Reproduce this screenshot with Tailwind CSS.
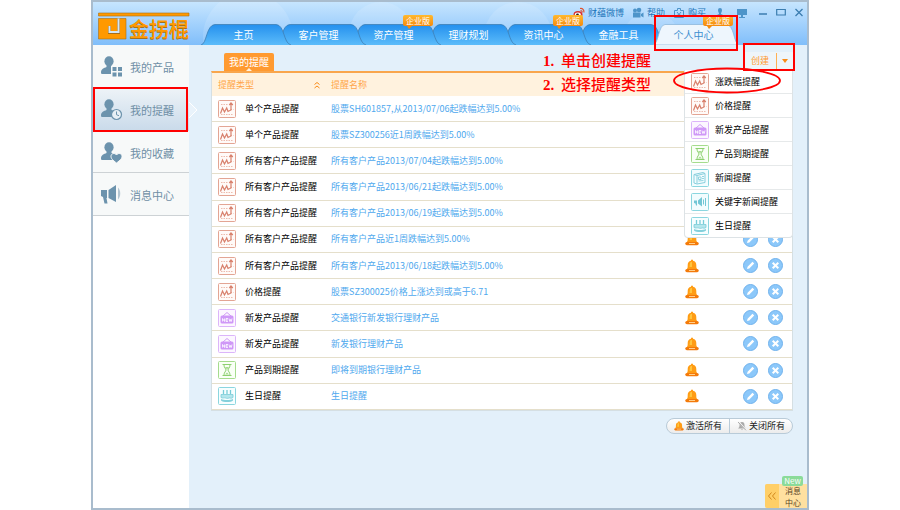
<!DOCTYPE html>
<html lang="zh-CN">
<head>
<meta charset="utf-8">
<meta name="viewport" content="width=device-width, initial-scale=1">
<title>金拐棍 - 我的提醒</title>
<script src="https://cdn.jsdelivr.net/npm/@tailwindcss/browser@4"></script>
</head>
<body class="bg-white font-['Noto_Sans_CJK_SC',sans-serif] text-[9px] leading-[12px] text-[#222]">

<svg class="absolute h-0 w-0" aria-hidden="true">
  <symbol id="chart" viewBox="0 0 18 18"><rect x=".5" y=".5" width="17" height="17" rx="1" fill="#fffaf8" stroke="#e3a594"/><path d="M3 14.500h12M3 4.500h7M12.500 9.500h3" stroke="#ecbcae" stroke-dasharray="1.500 1" fill="none"/><path d="M2.500 13.500 4.500 8l2 4 2.200-4 1.300 3.500 3-1.500V3.500M11.300 5 13 3l1.800 2" stroke="#d8806c" stroke-width="1.200" fill="none"/></symbol>
  <symbol id="new" viewBox="0 0 18 18"><rect x=".5" y=".5" width="17" height="17" rx="1" fill="#fcf7ff" stroke="#dcb5fa"/><path d="m5 7 4-3.500L13 7" stroke="#cf9bf5" fill="none"/><rect x="2.500" y="6.500" width="13" height="8" rx="1.500" fill="#cf98f7"/><path d="M4.500 12.500v-3l2 3v-3M10 9.500H8v3h2M8 11h2M11 9.500l.8 3 .7-2 .7 2 .8-3" stroke="#fff" stroke-width=".8" fill="none"/></symbol>
  <symbol id="glass" viewBox="0 0 18 18"><rect x=".5" y=".5" width="17" height="17" rx="1" fill="#f9fff6" stroke="#a5dc8d"/><path d="M4.500 3.500h9M4.500 14.500h9M6 4c0 3 2 3.500 2 5s-2 2-2 5M12 4c0 3-2 3.500-2 5s2 2 2 5" stroke="#8dd070" stroke-width="1" fill="none"/><path d="M7 6h4L9 8.500zM7 13.500l2-2 2 2z" fill="#a5dc8d"/></symbol>
  <symbol id="cake" viewBox="0 0 18 18"><rect x=".5" y=".5" width="17" height="17" rx="1" fill="#f6feff" stroke="#8bd6df"/><path d="M5.500 3v4M9 3v4M12.500 3v4" stroke="#78ccd8" stroke-width="1.300"/><path d="M3 7.500h12v3c-2 1.500-3 0-4 .5s-2 .5-3.500 0-3 .5-4.500-.5z" fill="#b4e6ec" stroke="#78ccd8" stroke-width=".8"/><path d="M3 12c3 1.300 9 1.300 12 0v1.500c-2 2-10 2-12 0z" fill="#83d0db"/></symbol>
  <symbol id="news" viewBox="0 0 18 18"><rect x=".5" y=".5" width="17" height="17" rx="1" fill="#f2fcfe" stroke="#8bd6df"/><path d="m3 5.500 9-2 2 1v9l-8 1.500-3-1zM6 14.500v-8l8-2M3 5.500l3 1" stroke="#88cfdd" fill="none"/><path d="M7.500 8h2.500v2.500H7.500zM11 7.500h2M11 9.500h2M7.500 12l5-.5" stroke="#88cfdd" stroke-width=".9" fill="none"/></symbol>
  <symbol id="horn" viewBox="0 0 18 18"><rect x=".5" y=".5" width="17" height="17" rx="1" fill="#f2fcfe" stroke="#8bd6df"/><path d="M3 7.500h3v5H5l-.5-2L3 10zM7 7.500 11 4v9.500l-4-3z" fill="#72c6d5"/><path d="M12.500 6.500v5M14.500 5v8" stroke="#72c6d5"/></symbol>
  <symbol id="bell" viewBox="0 0 14 14"><path d="M7 .5c1 0 1 .8 1 1.200 2.300.5 3.300 2 3.300 4.300 0 2.500 0 3 1.200 4.500h-11C2.700 9 2.700 8.500 2.700 6c0-2.300 1-3.800 3.300-4.300 0-.4 0-1.200 1-1.200z" fill="#ff9c14"/><path d="M5 4c.5-1.200 1.500-1.200 2-1v5H4.500z" fill="#ffc43c"/><rect x=".3" y="10" width="13.400" height="3.200" rx="1.600" fill="#f47a0a"/><path d="M4 11.500h6" stroke="#ffd08a"/></symbol>
  <symbol id="bell-off" viewBox="0 0 14 14"><path d="M7 1.500c3 0 3.500 2 3.500 4.500s.5 3 2 4.500h-11C3 9 3.500 8.500 3.500 6S4 1.500 7 1.500zM5.500 11.500h3L7 13z" fill="#aaa"/><path d="m2 1 11 12" stroke="#f6f6f6" stroke-width="2.200"/><path d="m1.500 1.500 11 11.500" stroke="#888"/></symbol>
  <symbol id="edit" viewBox="0 0 15 15"><circle cx="7.500" cy="7.500" r="7" fill="#8cc8fa" stroke="#70b2ec"/><path d="m4 11 .6-2.300 4.900-4.900 1.700 1.700-4.900 4.900z" fill="#fff"/></symbol>
  <symbol id="del" viewBox="0 0 15 15"><circle cx="7.500" cy="7.500" r="7" fill="#8cc8fa" stroke="#70b2ec"/><path d="m4.700 4.700 5.600 5.600M10.300 4.700l-5.600 5.600" stroke="#fff" stroke-width="2"/></symbol>
  <symbol id="person" viewBox="0 0 20 20"><ellipse cx="8" cy="5.300" rx="4.600" ry="5" fill="#6c93ad"/><path d="M0 16.500c0-3.500 3-4.500 5.500-5.500v-2h5v2c2 .8 4 1.500 5 3v4H1.500C.5 18 0 17.500 0 16.500z" fill="#6c93ad"/></symbol>
  <symbol id="tab" viewBox="0 0 90 21"><path d="M0 21C6 20 5 1 14 .5h61C84 1 82 19 90 21z" fill="url(#tabfill)"/><path d="M0 21C6 20 5 1 14 .5h61C84 1 82 19 90 21" fill="none" stroke="#3d7fb5" stroke-width=".8"/></symbol>
  <linearGradient id="tabfill" x1="0" y1="0" x2="0" y2="1"><stop offset="0" stop-color="#2490ee"/><stop offset="1" stop-color="#5cbcfa"/></linearGradient>
</svg>

<div class="relative mx-auto flex min-h-screen max-w-[718px] flex-col border-2 border-[#a9bccd] bg-[#e3f0fa]">
  <header class="relative isolate flex h-[43px] justify-between overflow-hidden bg-linear-to-b from-[#c6e5fe] to-[#80befa]">
    <svg class="absolute inset-0 h-full w-full" aria-hidden="true"><g fill="#fff" fill-opacity=".13"><circle cx="155" cy="35" r="45"/><circle cx="288" cy="32" r="32"/><circle cx="425" cy="34" r="34"/><circle cx="558" cy="40" r="30"/></g></svg>
    <a href="#" class="relative ml-1 mt-2.5 flex h-[30px] items-end" aria-label="金拐棍">
      <svg class="absolute left-0 top-0 h-[30px] w-[93px]" viewBox="0 0 93 30"><path d="M1.500 1h90.500v3H1.500zM1.500 6.500H29V27H1.500z" fill="#ff9900" stroke="#a66f1a" stroke-width=".6"/><path d="M21.500 7v13.500H12.500V14" fill="none" stroke="#a66f1a" stroke-width="3"/><path d="M21.500 6.500v13.500H12.500V14" fill="none" stroke="#d3e6f5" stroke-width="2"/></svg>
      <span class="ml-[32px] text-[20px] leading-[26px] font-medium text-[#ff9900] [text-shadow:0_1px_0_#a66f1a]">金拐棍</span>
    </a>
    <div class="relative flex flex-col justify-between">
      <nav class="mr-[3px] mt-[5px] flex h-3 items-center justify-end text-[#1b75b9]" aria-label="工具">
        <a href="#" class="flex items-center gap-[3px]"><svg class="h-3 w-3" viewBox="0 0 12 12"><ellipse cx="5" cy="7.500" rx="4.500" ry="3.500" fill="#d92f30"/><ellipse cx="4.800" cy="7.800" rx="3" ry="2.200" fill="#fff"/><circle cx="4.500" cy="8" r="1.400" fill="#222"/><path d="M7 1.500c2.500-.5 4.500 1.500 3.800 4M7.500 3.500c1 0 2 .8 1.500 2" stroke="#e0502c" stroke-width="1.200" fill="none"/></svg>财蕴微博</a>
        <a href="#" class="ml-2 flex items-center gap-[3px]"><svg class="h-3 w-3" viewBox="0 0 12 12" fill="#4d94c9"><circle cx="3" cy="3.500" r="2"/><circle cx="7" cy="3" r="2.300"/><path d="M1 5.500h7.500v5H1zM9 7l2.500-1.500v5L9 9z"/></svg>帮助</a>
        <a href="#" class="ml-2 flex items-center gap-[3px]"><svg class="h-3 w-3" viewBox="0 0 12 12" fill="none" stroke="#4d94c9"><path d="M1.500 3.500h3v-2h3v2h3v7h-9z"/><path d="m4 5 2 2.500L8 5M6 7v3M4.500 8h3"/></svg>购买</a>
        <button aria-label="用户" class="ml-2"><svg class="h-3 w-3" viewBox="0 0 12 12" fill="#4d94c9"><path d="M4 3a2 2 0 0 1 4 0c0 2-1 2.500-1 4l4 2v1H1V9l4-2c0-1.500-1-2-1-4z"/></svg></button>
        <button aria-label="屏幕" class="ml-2.5"><svg class="h-3 w-3" viewBox="0 0 12 12" fill="#4d94c9"><path d="M1 2h10v6H7v2h2v1H3v-1h2V8H1z"/></svg></button>
        <button aria-label="最小化" class="ml-2.5"><svg class="h-2.5 w-2.5" viewBox="0 0 10 10"><path d="M1 6h8" stroke="#3b7db0" stroke-width="1.500"/></svg></button>
        <button aria-label="最大化" class="ml-2"><svg class="h-2.5 w-2.5" viewBox="0 0 10 10"><path d="M.7 1.500h8.600v5.500H.7z" fill="none" stroke="#3b7db0" stroke-width="1.200"/></svg></button>
        <button aria-label="关闭" class="ml-2"><svg class="h-2.5 w-2.5" viewBox="0 0 10 10"><path d="m1.500 1 7 7M8.500 1l-7 7" stroke="#3b7db0" stroke-width="1.300"/></svg></button>
      </nav>
      <nav id="tabs" class="mr-[76px] flex text-[10px] text-white" aria-label="主导航"></nav>
    </div>
  </header>

  <div class="flex flex-1">
    <aside class="w-24 shrink-0 bg-white">
      <nav class="text-[11px] text-[#6f8fa6]" aria-label="侧栏">
        <a href="#" class="flex h-[42px] items-center gap-[7px] bg-[#f7f9f9] pl-2 pt-0.5"><svg class="h-[22px] w-[22px]" viewBox="0 0 22 22"><use href="#person" width="20" height="20"/><path d="M10 10h12v12H10z" fill="#f7f9f9"/><path d="M11.500 11h4v4h-4zM17 11h4v4h-4zM11.500 16.500h4v4h-4zM17 16.500h4v4h-4z" fill="#6c93ad"/></svg>我的产品</a>
        <a href="#" aria-current="page" class="flex h-11 items-center gap-[7px] bg-linear-to-b from-[#eff4f8] to-[#c9daea] pl-2 pt-0.5"><svg class="h-[22px] w-[22px]" viewBox="0 0 22 22"><use href="#person" width="20" height="20"/><circle cx="15.500" cy="15.500" r="5" fill="#e7eff5" stroke="#6c93ad" stroke-width="1.200"/><path d="M15.500 12.500v3.200l2.500 1" fill="none" stroke="#6c93ad"/></svg>我的提醒</a>
        <a href="#" class="flex h-[42px] items-center gap-[7px] border-b border-[#cdd2d5] bg-[#f7f9f9] pl-2 pt-0.5"><svg class="h-[22px] w-[22px]" viewBox="0 0 22 22"><use href="#person" width="20" height="20"/><path d="M15.500 21c-4-3-5.500-4.500-5.500-6.700 0-3 4-3.800 5.500-1.300 1.500-2.500 5.500-1.700 5.500 1.300 0 2.200-1.500 3.700-5.500 6.700z" fill="#6c93ad" stroke="#f7f9f9"/></svg>我的收藏</a>
        <a href="#" class="flex h-[43px] items-center gap-[7px] border-b border-[#cdd2d5] bg-[#f7f9f9] pl-2 pt-0.5"><svg class="h-[22px] w-[22px]" viewBox="0 0 22 22" fill="#6c93ad"><path d="M0 6h6v8H5.500l1 5.500h-3L2 13l-2-1zM7.500 6l7.500-5v17l-7.500-4z"/><path d="M17 3.500c3 3 3 9 0 12z" fill="#b4c6d2"/></svg>消息中心</a>
      </nav>
    </aside>

    <main class="relative flex-1 pl-[22px] pr-3.5 pt-[7px]">
      <svg class="absolute left-0 top-14 h-[18px] w-2.5" viewBox="0 0 10 18" aria-hidden="true"><path d="m0 1 8 8-8 8" fill="#e9f3fb" stroke="#fff"/></svg>
      <div class="flex items-end justify-between">
        <h1 class="relative ml-[13px] flex h-[18px] items-center rounded-t-xs bg-[#ff9a30] px-[5px] text-[10px] text-white">我的提醒<svg class="absolute bottom-0 left-[22px] h-[3px] w-1.5" viewBox="0 0 6 3"><path d="m0 3 3-3 3 3z" fill="#fff2de"/></svg></h1>
        <div class="mb-px flex h-[18px] items-center bg-[#eef5fa] text-[#ff9a30]">
          <button class="px-[7px]">创建</button>
          <button aria-label="选择提醒类型" class="flex h-4 w-[17px] items-center justify-center border-l border-[#ffb053]"><svg class="h-1 w-1.5" viewBox="0 0 6 4"><path d="M0 0h6L3 4z" fill="#f98b16"/></svg></button>
        </div>
      </div>
      <table class="h-[340px] w-full table-fixed border-separate border-spacing-0 border border-t-2 border-[#d5dfe3] border-t-[#f9a64c] bg-white text-left">
        <colgroup><col class="w-[33px]"><col class="w-[86px]"><col><col class="w-[44px]"><col class="w-[24px]"><col class="w-[25px]"><col class="w-[25px]"><col class="w-[4px]"></colgroup>
        <thead><tr class="bg-[#fff2de] text-[#ffa64a]">
          <th colspan="2" class="h-[23px] pl-1.5 font-normal"><span class="flex items-center justify-between pr-2.5">提醒类型<svg class="h-2 w-2" viewBox="0 0 8 8"><path d="m1.500 3.500 2.500-2 2.500 2M1.500 7 4 5l2.500 2" fill="none" stroke="#f98b16"/></svg></span></th>
          <th class="font-normal">提醒名称</th><th colspan="5"></th>
        </tr></thead>
        <tbody id="rows"></tbody>
      </table>
      <div class="mt-[7px] flex justify-end">
        <div class="flex h-4 rounded-full border border-[#b9cbd8] bg-linear-to-b from-white to-[#ececec]">
          <button class="flex w-[62px] items-center justify-center gap-0.5"><svg class="h-2.5 w-2.5"><use href="#bell"/></svg>激活所有</button>
          <button class="flex w-[63px] items-center justify-center gap-0.5 border-l border-[#b9cbd8]"><svg class="h-2.5 w-2.5"><use href="#bell-off"/></svg>关闭所有</button>
        </div>
      </div>
    </main>
  </div>

  <!-- create menu -->
  <ul id="menu" class="absolute right-3.5 top-[68px] w-[109px] rounded-b-sm border border-t-0 border-[#dde3e6] bg-white"></ul>

  <!-- message centre -->
  <button class="absolute bottom-0 right-0 flex h-6 w-[42px] rounded-l-xs bg-[#ffe0a0] text-[#5a4526]">
    <span class="flex h-full w-3.5 items-center justify-center rounded-l-xs bg-[#ffcf68]"><svg class="h-2 w-2" viewBox="0 0 8 8"><path d="M3.500.5.500 4l3 3.500M7.500.5l-3 3.500 3 3.500" fill="none" stroke="#d1891c"/></svg></span>
    <span class="flex-1 pt-px text-center text-[8px] leading-[12px]">消息<br>中心</span>
    <span class="absolute -top-2 right-1 rounded-xs bg-[#8bdb99] px-0.5 text-[8px] leading-[10px] text-white">New</span>
  </button>

  <!-- walkthrough notes -->
  <ol class="absolute right-[152px] top-[47px] w-[112px] text-[15px] leading-[24px] text-[#f00] font-['Liberation_Serif','Noto_Sans_CJK_SC',serif] font-medium whitespace-nowrap">
    <li><b class="inline-block w-[18px]">1.</b>单击创建提醒</li>
    <li><b class="inline-block w-[18px]">2.</b>选择提醒类型</li>
  </ol>
  <div class="absolute left-0 top-[85px] h-[45px] w-[95px] border-2 border-[#f00]"></div>
  <div class="absolute right-[69px] top-[13px] h-9 w-[84px] border-2 border-[#f00]"></div>
  <div class="absolute right-3 top-[41px] h-7 w-[52px] border-2 border-[#f00]"></div>
  <svg class="absolute right-[25px] top-[65px] h-[27px] w-[110px]" viewBox="0 0 110 27"><ellipse cx="55" cy="13.500" rx="53" ry="12" fill="none" stroke="#f00" stroke-width="1.800"/></svg>
</div>

<script>
// Each tab's right edge overlaps the next one; the open tab lies on top.
const tabs = [['主页', 0, 'z-6'], ['客户管理', 0, 'z-5'], ['资产管理', 1, 'z-4'], ['理财规划', 0, 'z-3'], ['资讯中心', 1, 'z-2'], ['金融工具', 0, 'z-1'], ['个人中心', 1, 'z-10']];
document.getElementById('tabs').innerHTML = tabs.map(([name, badge, level], i) => {
  const active = i === tabs.length - 1;
  const shape = active
    ? '<svg class="absolute -left-[5px] top-0 h-[21px] w-[90px]" viewBox="0 0 90 21"><path d="M2 21C8 20 7 1 14 .5h61C84 1 82 19 88 21z" fill="#eef6fd" stroke="#8db8da" stroke-width=".8"/></svg>'
    : '<svg class="absolute -left-[5px] top-0 h-[21px] w-[90px]"><use href="#tab"/></svg>';
  const tag = badge ? '<span class="absolute -top-[9px] left-[47px] z-10 rounded-xs bg-linear-to-b from-[#ffb92e] to-[#f58a0c] px-[3px] text-[8px] leading-[11px] whitespace-nowrap text-white">企业版<svg class="absolute left-1 top-[11px] h-1 w-1.5" viewBox="0 0 6 4"><path d="M0 0h5L2 3z" fill="#f58a0c"/></svg></span>' : '';
  return `<a href="#" class="relative ${level} flex h-[21px] w-[75px] items-center justify-center ${active ? 'text-[#3e8fd0]' : ''}">${shape}<span class="relative">${name}</span>${tag}</a>`;
}).join('');

const rows = [
  ['chart', '单个产品提醒', '股票SH601857,从2013/07/06起跌幅达到5.00%'],
  ['chart', '单个产品提醒', '股票SZ300256近1周跌幅达到5.00%'],
  ['chart', '所有客户产品提醒', '所有客户产品2013/07/04起跌幅达到5.00%'],
  ['chart', '所有客户产品提醒', '所有客户产品2013/06/21起跌幅达到5.00%'],
  ['chart', '所有客户产品提醒', '所有客户产品2013/06/19起跌幅达到5.00%'],
  ['chart', '所有客户产品提醒', '所有客户产品近1周跌幅达到5.00%'],
  ['chart', '所有客户产品提醒', '所有客户产品2013/06/18起跌幅达到5.00%'],
  ['chart', '价格提醒', '股票SZ300025价格上涨达到或高于6.71'],
  ['new', '新发产品提醒', '交通银行新发银行理财产品'],
  ['new', '新发产品提醒', '新发银行理财产品'],
  ['glass', '产品到期提醒', '即将到期银行理财产品'],
  ['cake', '生日提醒', '生日提醒'],
];
const line = 'border-b border-[#e5dfcb]';
document.getElementById('rows').innerHTML = rows.map(([icon, type, name]) => `<tr>
  <td class="${line} pl-1.5"><svg class="h-[18px] w-[18px]"><use href="#${icon}"/></svg></td>
  <td class="${line} whitespace-nowrap text-black">${type}</td>
  <td class="${line} whitespace-nowrap"><a href="#" class="text-[#4ea8ee]">${name}</a></td>
  <td class="${line}"><button aria-label="提醒开关" class="mx-auto block"><svg class="h-3.5 w-3.5"><use href="#bell"/></svg></button></td>
  <td class="${line}"></td>
  <td class="${line}"><button aria-label="编辑" class="mx-auto block"><svg class="h-[15px] w-[15px]"><use href="#edit"/></svg></button></td>
  <td class="${line}"><button aria-label="删除" class="mx-auto block"><svg class="h-[15px] w-[15px]"><use href="#del"/></svg></button></td>
  <td class="${line}"></td>
</tr>`).join('');

const menu = [['chart', '涨跌幅提醒'], ['chart', '价格提醒'], ['new', '新发产品提醒'], ['glass', '产品到期提醒'], ['news', '新闻提醒'], ['horn', '关键字新闻提醒'], ['cake', '生日提醒']];
document.getElementById('menu').innerHTML = menu.map(([icon, name]) =>
  `<li class="border-b border-[#e6e9ea] last:border-b-0"><button class="flex h-[23px] w-full items-center gap-1.5 pl-1.5 text-black"><svg class="h-[18px] w-[18px]"><use href="#${icon}"/></svg>${name}</button></li>`).join('');
</script>
</body>
</html>
